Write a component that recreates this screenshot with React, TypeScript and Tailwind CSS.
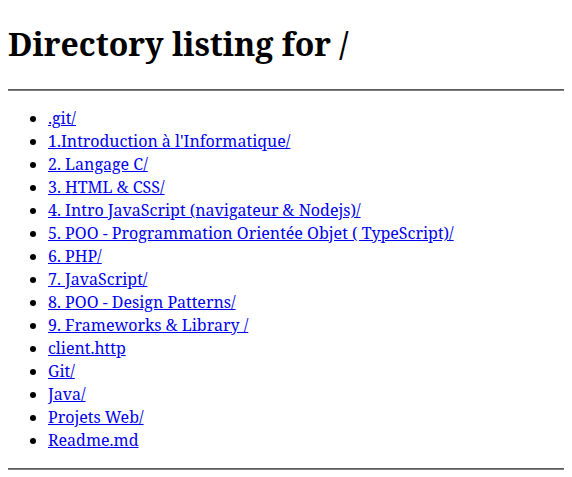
const entries = [
  ".git/",
  "1.Introduction à l'Informatique/",
  "2. Langage C/",
  "3. HTML & CSS/",
  "4. Intro JavaScript (navigateur & Nodejs)/",
  "5. POO - Programmation Orientée Objet ( TypeScript)/",
  "6. PHP/",
  "7. JavaScript/",
  "8. POO - Design Patterns/",
  "9. Frameworks & Library /",
  "client.http",
  "Git/",
  "Java/",
  "Projets Web/",
  "Readme.md",
];

export default function App() {
  return (
    <div className="m-2 font-['Noto_Serif','DejaVu_Serif',serif] text-base leading-[23px] text-black">
      <h1 className="my-[21.44px] text-[32px] leading-[46px] font-bold">Directory listing for /</h1>
      <hr className="my-2 border-t border-b border-t-[#5a5a5a] border-b-[#808080]" />
      <ul className="my-4 list-disc pl-10">
        {entries.map((name) => (
          <li key={name}>
            <a href="#" className="text-[#0000ee] underline">
              {name}
            </a>
          </li>
        ))}
      </ul>
      <hr className="my-2 border-t border-b border-t-[#5a5a5a] border-b-[#808080]" />
    </div>
  );
}
